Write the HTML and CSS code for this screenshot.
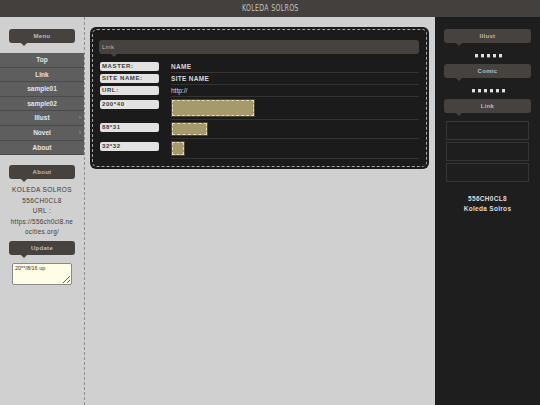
FILE: index.html
```html
<!DOCTYPE html>
<html lang="en">

<head>
    <meta charset="UTF-8">
    <meta name="viewport" content="width=device-width, initial-scale=1.0">
    <title>KOLEDA SOLROS</title>
    <link rel="stylesheet" href="styles.css">
</head>

<body>
    <header class="site-head"><span class="site-title">KOLEDA SOLROS</span></header>

    <div class="layout">
        <!-- left column: menu, about, update -->
        <aside class="side-left">
            <div class="bubble">Menu</div>
            <ul class="menu">
                <li><a href="#">Top</a></li>
                <li><a href="#">Link</a></li>
                <li><a href="#">sample01</a></li>
                <li><a href="#">sample02</a></li>
                <li class="has-sub"><a href="#">Illust</a></li>
                <li class="has-sub"><a href="#">Novel</a></li>
                <li><a href="#">About</a></li>
            </ul>

            <div class="bubble">About</div>
            <p class="about">
                KOLEDA SOLROS<br>
                556CH0CL8<br>
                URL :<br>
                <span class="url">https://556ch0cl8.neocities.org/</span>
            </p>

            <div class="bubble">Update</div>
            <textarea class="update">20**/8/16 up</textarea>
        </aside>

        <!-- main column -->
        <main class="content">
            <section class="card">
                <div class="card-inner">
                    <div class="bubble bubble-left">Link</div>

                    <div class="rows">
                        <div class="row">
                            <span class="label">MASTER:</span>
                            <div class="val strong">NAME</div>
                        </div>
                        <div class="row">
                            <span class="label">SITE NAME:</span>
                            <div class="val strong">SITE NAME</div>
                        </div>
                        <div class="row">
                            <span class="label">URL:</span>
                            <div class="val">http://</div>
                        </div>
                        <div class="row">
                            <span class="label">200*40</span>
                            <div class="val banner-cell"><span class="banner b200"></span></div>
                        </div>
                        <div class="row">
                            <span class="label">88*31</span>
                            <div class="val banner-cell"><span class="banner b88"></span></div>
                        </div>
                        <div class="row">
                            <span class="label">32*32</span>
                            <div class="val banner-cell"><span class="banner b32"></span></div>
                        </div>
                    </div>
                </div>
            </section>
        </main>

        <!-- right column -->
        <aside class="side-right">
            <div class="bubble">Illust</div>
            <div class="dots"><i></i><i></i><i></i><i></i><i></i></div>

            <div class="bubble">Comic</div>
            <div class="dots"><i></i><i></i><i></i><i></i><i></i><i></i></div>

            <div class="bubble">Link</div>
            <div class="link-boxes">
                <div class="link-box"></div>
                <div class="link-box"></div>
                <div class="link-box"></div>
            </div>

            <p class="sign">556CH0CL8<br>Koleda Solros</p>
        </aside>
    </div>
</body>

</html>
```

FILE: styles.css
```css
body {
    margin: 0;
    padding: 0;
    background-color: #d0d0d0;
    font-family: 'Liberation Sans', Arial, sans-serif;
    font-size: 7px;
    color: #333333;
}

.site-head {
    height: 17px;
    line-height: 17px;
    background-color: #43403e;
    text-align: center;
}

/* narrow title lettering */
.site-title {
    display: inline-block;
    color: #c4c4c4;
    font-family: 'DejaVu Sans', sans-serif;
    font-size: 8px;
    letter-spacing: 0.4px;
    transform: scaleX(0.78);
}

.layout {
    display: grid;
    grid-template-columns: 85px 1fr 105px;
    min-height: calc(100vh - 17px);
}

/* Speech bubble headings */
.bubble {
    position: relative;
    height: 14px;
    line-height: 14px;
    margin: 0 9px;
    background-color: #454240;
    border-radius: 3px;
    color: #bdbdbd;
    font-size: 6px;
    font-weight: bold;
    letter-spacing: 0.3px;
    text-align: center;
}

.bubble::after {
    content: "";
    position: absolute;
    left: 12px;
    top: 100%;
    border: 3px solid transparent;
    border-top-color: #454240;
}

.bubble-left {
    margin: 0;
    padding-left: 3px;
    text-align: left;
    font-weight: normal;
}

/* Left column */
.side-left {
    border-right: 1px dashed #8c8c8c;
    padding-top: 12px;
}

.menu {
    list-style: none;
    margin: 10px 0 10px;
    padding: 0;
}

.menu li {
    position: relative;
    background-color: #5e5e5e;
    border-bottom: 1px solid #4a4a4a;
}

.menu a {
    display: block;
    height: 13.6px;
    line-height: 13.6px;
    color: #e6e6e6;
    font-size: 6.5px;
    font-weight: bold;
    text-align: center;
    text-decoration: none;
}

.menu .has-sub::after {
    content: "›";
    position: absolute;
    right: 3px;
    top: 0;
    line-height: 13px;
    color: #999999;
    font-size: 7px;
}

.about {
    margin: 6px 9px 3px;
    line-height: 10.5px;
    text-align: center;
    font-size: 6.5px;
    letter-spacing: 0.4px;
    color: #3a3a3a;
}

.about .url {
    word-break: break-all;
    font-size: 6.3px;
    letter-spacing: 0.3px;
}

.update {
    display: block;
    box-sizing: border-box;
    width: 60px;
    height: 22px;
    margin: 8px 0 0 12px;
    padding: 1px 2px;
    background-color: #fffde6;
    border: 1px solid #8a8a8a;
    border-radius: 2px;
    font-family: 'Liberation Sans', Arial, sans-serif;
    font-size: 5.5px;
    color: #333333;
}

/* Main column */
.content {
    padding: 10px 6px 0 5px;
}

.card {
    background-color: #1b1b1b;
    border-radius: 6px;
    padding: 2px;
}

.card-inner {
    border: 1px dashed #a8a8a8;
    border-radius: 5px;
    padding: 10px 7px 7px 6px;
}

.rows {
    margin-top: 7px;
}

.row {
    display: flex;
    gap: 12px;
}

.label {
    box-sizing: border-box;
    width: 59px;
    height: 9px;
    line-height: 9px;
    margin: 1px 0 0 1px;
    padding-left: 2px;
    background-color: #e2e2e2;
    border-radius: 2px;
    color: #3a3a3a;
    font-size: 6px;
    font-weight: bold;
    letter-spacing: 0.6px;
}

.val {
    flex: 1;
    padding: 1px 0 1px;
    line-height: 9px;
    border-bottom: 1px solid #333333;
    color: #d8d8d8;
    font-size: 6.5px;
}

.val.strong {
    font-weight: bold;
    letter-spacing: 0.3px;
}

.banner-cell {
    padding: 3px 0;
    line-height: 0;
}

.row:nth-child(4) .label,
.row:nth-child(5) .label,
.row:nth-child(6) .label {
    margin-top: 3px;
}

/* dotted-edge banner placeholders */
.banner {
    display: inline-block;
    box-sizing: border-box;
    margin-left: 1px;
    background-color: #a69a6d;
    border: 1px dashed #e3dab8;
    box-shadow: 0 0 0 1px #4d4530;
}

.b200 {
    width: 82px;
    height: 16px;
}

.b88 {
    width: 35px;
    height: 12px;
}

.b32 {
    width: 12px;
    height: 13px;
}

/* Right column */
.side-right {
    background-color: #1e1e1e;
    padding-top: 12px;
}

.dots {
    display: flex;
    justify-content: center;
    gap: 3px;
    height: 8px;
    margin: 9px 0 4px;
    padding-left: 1px;
}

.dots i {
    width: 3px;
    height: 3px;
    margin-top: 2px;
    background-color: #e0e0e0;
    box-shadow: 0 1px 0 #6a6a6a;
}

.link-boxes {
    display: flex;
    flex-direction: column;
    gap: 2px;
    margin: 8px 11px 0;
}

.link-box {
    height: 17px;
    border: 1px solid #353535;
}

.sign {
    margin: 12px 0 0;
    line-height: 10px;
    text-align: center;
    color: #dcdcdc;
    font-size: 6.5px;
    font-weight: bold;
    letter-spacing: 0.3px;
}
```
